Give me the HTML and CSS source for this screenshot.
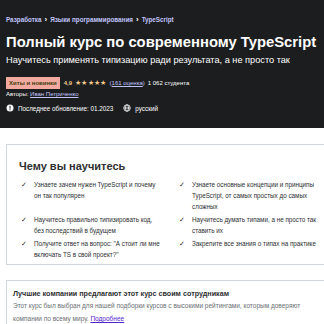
FILE: index.html
```html
<!DOCTYPE html>
<html>
<head>
  <title>TypeScript</title>
  <link rel="stylesheet" href="styles.css">
</head>
<body>
  <div class="hero">
    <div class="crumbs">
      <span>Разработка</span><span class="sep">›</span>
      <span>Языки программирования</span><span class="sep">›</span>
      <span>TypeScript</span>
    </div>
    <h1>Полный курс по современному TypeScript</h1>
    <div class="subtitle">Научитесь применять типизацию ради результата, а не просто так</div>
    <div class="rating-row">
      <span class="badge">Хиты и новинки</span>
      <span class="score">4,9</span>
      <span class="stars">★★★★★</span>
      <span class="count">(<u>161 оценка</u>)</span>
      <span>1 062 студента</span>
    </div>
    <div class="authors">Авторы: <u>Иван Петриченко</u></div>
    <div class="info-row">
      <span class="info">
        <svg width="8" height="8" viewBox="0 0 16 16"><circle cx="8" cy="8" r="7" fill="#fff"/><rect x="7" y="3.5" width="2" height="6" fill="#1c1d1f"/><rect x="7" y="10.5" width="2" height="2" fill="#1c1d1f"/></svg>
        Последнее обновление: 01.2023
      </span>
      <span class="info">
        <svg width="8" height="8" viewBox="0 0 16 16" fill="none" stroke="#fff" stroke-width="1.6"><circle cx="8" cy="8" r="6.5"/><ellipse cx="8" cy="8" rx="3" ry="6.5"/><line x1="1.5" y1="8" x2="14.5" y2="8"/></svg>
        русский
      </span>
    </div>
  </div>

  <div class="content">
    <div class="learn">
      <h2>Чему вы научитесь</h2>
      <div class="learn-grid">
        <div class="item"><span class="check">✓</span><span>Узнаете зачем нужен TypeScript и почему он так популярен</span></div>
        <div class="item"><span class="check">✓</span><span>Узнаете основные концепции и принципы TypeScript, от самых простых до самых сложных</span></div>
        <div class="item"><span class="check">✓</span><span>Научитесь правильно типизировать код, без последствий в будущем</span></div>
        <div class="item"><span class="check">✓</span><span>Научитесь думать типами, а не просто так ставить их</span></div>
        <div class="item"><span class="check">✓</span><span>Получите ответ на вопрос: "А стоит ли мне включать TS в свой проект?"</span></div>
        <div class="item"><span class="check">✓</span><span>Закрепите все знания о типах на практике</span></div>
      </div>
    </div>

    <div class="business">
      <h3>Лучшие компании предлагают этот курс своим сотрудникам</h3>
      <p>Этот курс был выбран для нашей подборки курсов с высокими рейтингами, которым доверяют компании по всему миру. <u>Подробнее</u></p>
    </div>
  </div>
</body>
</html>
```

FILE: styles.css
```css
body {
  margin: 0;
  font-family: "Liberation Sans", Arial, sans-serif;
  color: #2d2f31;
  background: #fff;
}

.hero {
  background: #1c1d1f;
  color: #fff;
  padding: 15px 6px 16px;
  white-space: nowrap;
}

.crumbs {
  display: flex;
  align-items: center;
  gap: 3px;
  font-size: 6.3px;
  font-weight: bold;
  color: #c0c4fc;
}

.crumbs .sep {
  color: #fff;
  font-size: 8px;
}

h1 {
  font-size: 14.8px;
  margin: 8px 0 0;
  line-height: 20px;
}

.subtitle {
  font-size: 9.2px;
  margin-top: 3px;
}

.rating-row {
  display: flex;
  align-items: center;
  gap: 3px;
  font-size: 6px;
  margin-top: 12px;
}

.badge {
  background: #f1a9a0;
  color: #3d3c0a;
  padding: 3px 3px;
  margin-right: 1px;
  font-weight: bold;
}

.score {
  color: #f3ca8c;
  font-weight: bold;
}

.stars {
  color: #f3ca8c;
  font-size: 6.5px;
  letter-spacing: 0.3px;
}

.count {
  color: #c0c4fc;
}

.authors {
  font-size: 6px;
  margin-top: 2px;
}

.authors u {
  color: #c0c4fc;
}

.info-row {
  display: flex;
  gap: 10px;
  font-size: 6.3px;
  margin-top: 7px;
}

.info {
  display: flex;
  align-items: center;
  gap: 4px;
}

.content {
  padding: 16px 0 0 6px;
}

.learn {
  border: 1px solid #d1d7dc;
  border-right: none;
  padding: 15px 12px 4px;
}

h2 {
  font-size: 11px;
  margin: 0 0 7px;
}

.learn-grid {
  display: grid;
  grid-template-columns: 160px 140px;
  row-gap: 2px;
  font-size: 6.3px;
  line-height: 11px;
}

.item {
  display: flex;
  gap: 7px;
  padding: 0 18px 0 2px;
}

.item:nth-child(even) {
  padding: 0;
}

.check {
  font-size: 7px;
  flex: none;
}

.business {
  border: 1px solid #d1d7dc;
  border-right: none;
  margin-top: 15px;
  padding: 8px 6px;
}

h3 {
  font-size: 7.2px;
  margin: 0 0 1px;
}

.business p {
  margin: 0;
  font-size: 6.5px;
  line-height: 13px;
  color: #6a6f73;
  padding-right: 14px;
}

.business u {
  color: #5624d0;
}
```
